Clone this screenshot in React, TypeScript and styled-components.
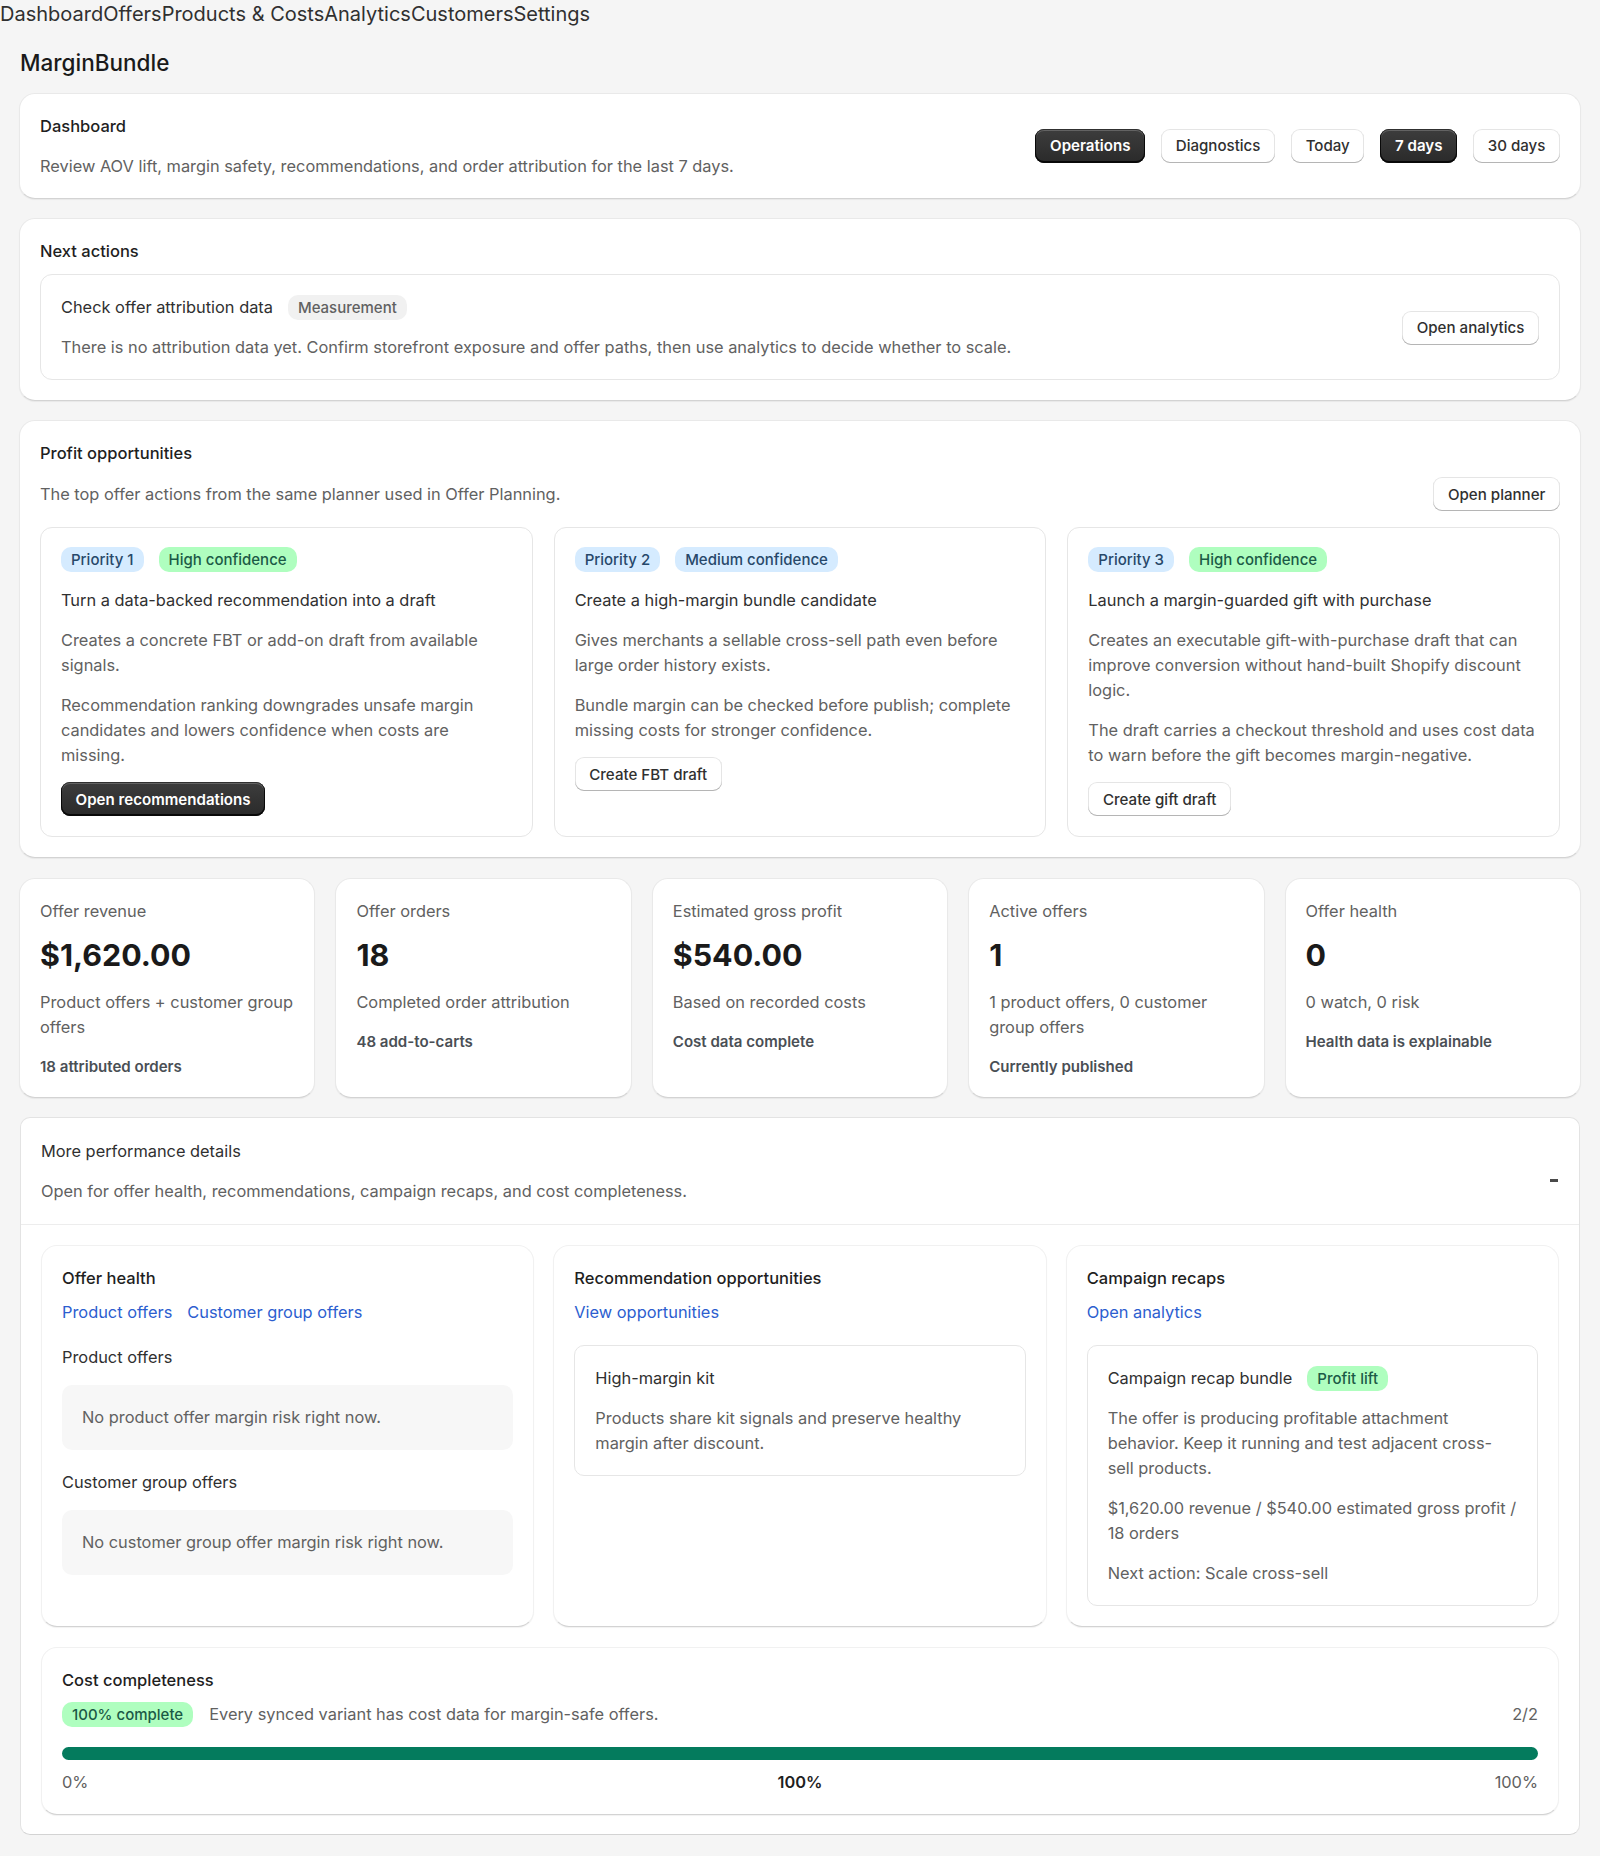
import styled, { createGlobalStyle } from 'styled-components'

const GlobalStyle = createGlobalStyle`
    * {
        box-sizing: border-box;
    }
    body {
        margin: 0;
        background: #f5f5f5;
        color: #303030;
        font-family: Inter, "Noto Sans", sans-serif;
        font-size: 16.37px;
        line-height: 25px;
    }
`

const NAV_ITEMS = ['Dashboard', 'Offers', 'Products & Costs', 'Analytics', 'Customers', 'Settings']

const OPPORTUNITIES = [
    {
        priority: 'Priority 1',
        confidence: 'High confidence',
        tone: 'success' as const,
        title: 'Turn a data-backed recommendation into a draft',
        summary: 'Creates a concrete FBT or add-on draft from available signals.',
        detail: 'Recommendation ranking downgrades unsafe margin candidates and lowers confidence when costs are missing.',
        action: 'Open recommendations',
        primary: true,
    },
    {
        priority: 'Priority 2',
        confidence: 'Medium confidence',
        tone: 'info' as const,
        title: 'Create a high-margin bundle candidate',
        summary: 'Gives merchants a sellable cross-sell path even before large order history exists.',
        detail: 'Bundle margin can be checked before publish; complete missing costs for stronger confidence.',
        action: 'Create FBT draft',
        primary: false,
    },
    {
        priority: 'Priority 3',
        confidence: 'High confidence',
        tone: 'success' as const,
        title: 'Launch a margin-guarded gift with purchase',
        summary: 'Creates an executable gift-with-purchase draft that can improve conversion without hand-built Shopify discount logic.',
        detail: 'The draft carries a checkout threshold and uses cost data to warn before the gift becomes margin-negative.',
        action: 'Create gift draft',
        primary: false,
    },
]

const METRICS = [
    { label: 'Offer revenue', value: '$1,620.00', sub: 'Product offers + customer group offers', note: '18 attributed orders' },
    { label: 'Offer orders', value: '18', sub: 'Completed order attribution', note: '48 add-to-carts' },
    { label: 'Estimated gross profit', value: '$540.00', sub: 'Based on recorded costs', note: 'Cost data complete' },
    { label: 'Active offers', value: '1', sub: '1 product offers, 0 customer group offers', note: 'Currently published' },
    { label: 'Offer health', value: '0', sub: '0 watch, 0 risk', note: 'Health data is explainable' },
]

const App = () => {
    return (
        <>
            <GlobalStyle />
            <Nav>
                {NAV_ITEMS.map((item) => (
                    <NavLink key={item}>{item}</NavLink>
                ))}
            </Nav>
            <Page>
                <AppTitle>MarginBundle</AppTitle>
                <Stack>
                    <HeaderCard>
                        <Column>
                            <CardTitle>Dashboard</CardTitle>
                            <Muted>Review AOV lift, margin safety, recommendations, and order attribution for the last 7 days.</Muted>
                        </Column>
                        <ButtonRow>
                            <Button $primary>Operations</Button>
                            <Button>Diagnostics</Button>
                            <Button>Today</Button>
                            <Button $primary>7 days</Button>
                            <Button>30 days</Button>
                        </ButtonRow>
                    </HeaderCard>

                    <Card>
                        <CardTitle>Next actions</CardTitle>
                        <ActionBox>
                            <Column>
                                <TitleLine>
                                    <span>Check offer attribution data</span>
                                    <Badge $tone="neutral">Measurement</Badge>
                                </TitleLine>
                                <Muted>There is no attribution data yet. Confirm storefront exposure and offer paths, then use analytics to decide whether to scale.</Muted>
                            </Column>
                            <Button>Open analytics</Button>
                        </ActionBox>
                    </Card>

                    <Card>
                        <CardTitle>Profit opportunities</CardTitle>
                        <PlannerRow>
                            <Muted>The top offer actions from the same planner used in Offer Planning.</Muted>
                            <Button>Open planner</Button>
                        </PlannerRow>
                        <ThreeColumns>
                            {OPPORTUNITIES.map((item) => (
                                <OpportunityCard key={item.priority}>
                                    <BadgeRow>
                                        <Badge $tone="info">{item.priority}</Badge>
                                        <Badge $tone={item.tone}>{item.confidence}</Badge>
                                    </BadgeRow>
                                    <div>{item.title}</div>
                                    <Muted>{item.summary}</Muted>
                                    <Muted>{item.detail}</Muted>
                                    <CardAction>
                                        <Button $primary={item.primary}>{item.action}</Button>
                                    </CardAction>
                                </OpportunityCard>
                            ))}
                        </ThreeColumns>
                    </Card>

                    <MetricGrid>
                        {METRICS.map((metric) => (
                            <MetricCard key={metric.label}>
                                <Muted>{metric.label}</Muted>
                                <MetricValue>{metric.value}</MetricValue>
                                <MetricSub>{metric.sub}</MetricSub>
                                <MetricNote>{metric.note}</MetricNote>
                            </MetricCard>
                        ))}
                    </MetricGrid>

                    <Details>
                        <DetailsHead>
                            <Column>
                                <div>More performance details</div>
                                <Muted>Open for offer health, recommendations, campaign recaps, and cost completeness.</Muted>
                            </Column>
                            <Collapse />
                        </DetailsHead>
                        <DetailsBody>
                            <DetailColumns>
                                <DetailCard>
                                    <CardTitle>Offer health</CardTitle>
                                    <LinkRow>
                                        <TextLink>Product offers</TextLink>
                                        <TextLink>Customer group offers</TextLink>
                                    </LinkRow>
                                    <SubLabel>Product offers</SubLabel>
                                    <EmptyBox>No product offer margin risk right now.</EmptyBox>
                                    <SubLabel>Customer group offers</SubLabel>
                                    <EmptyBox>No customer group offer margin risk right now.</EmptyBox>
                                </DetailCard>
                                <DetailCard>
                                    <CardTitle>Recommendation opportunities</CardTitle>
                                    <LinkRow>
                                        <TextLink>View opportunities</TextLink>
                                    </LinkRow>
                                    <ItemBox>
                                        <div>High-margin kit</div>
                                        <Muted>Products share kit signals and preserve healthy margin after discount.</Muted>
                                    </ItemBox>
                                </DetailCard>
                                <DetailCard>
                                    <CardTitle>Campaign recaps</CardTitle>
                                    <LinkRow>
                                        <TextLink>Open analytics</TextLink>
                                    </LinkRow>
                                    <ItemBox>
                                        <TitleLine>
                                            <span>Campaign recap bundle</span>
                                            <Badge $tone="success">Profit lift</Badge>
                                        </TitleLine>
                                        <Muted>The offer is producing profitable attachment behavior. Keep it running and test adjacent cross-sell products.</Muted>
                                        <Muted>$1,620.00 revenue / $540.00 estimated gross profit / 18 orders</Muted>
                                        <Muted>Next action: Scale cross-sell</Muted>
                                    </ItemBox>
                                </DetailCard>
                            </DetailColumns>
                            <CostCard>
                                <CardTitle>Cost completeness</CardTitle>
                                <CostRow>
                                    <Badge $tone="success">100% complete</Badge>
                                    <Muted>Every synced variant has cost data for margin-safe offers.</Muted>
                                    <CostCount>2/2</CostCount>
                                </CostRow>
                                <Progress>
                                    <ProgressFill style={{ width: '100%' }} />
                                </Progress>
                                <ScaleRow>
                                    <Muted>0%</Muted>
                                    <ScaleValue>100%</ScaleValue>
                                    <ScaleEnd>100%</ScaleEnd>
                                </ScaleRow>
                            </CostCard>
                        </DetailsBody>
                    </Details>
                </Stack>
            </Page>
        </>
    )
}

const Nav = styled.nav`
    display: flex;
    height: 28px;
    font-size: 20px;
    line-height: 28px;
    color: #303030;
`

const NavLink = styled.span`
    white-space: nowrap;
`

const Page = styled.main`
    padding: 20px 19px 21px;
`

const AppTitle = styled.h1`
    margin: 0 0 15px 1px;
    font-size: 22.5px;
    line-height: 30px;
    font-weight: 550;
    color: #1a1a1a;
`

const Stack = styled.div`
    display: flex;
    flex-direction: column;
    gap: 19px;
`

const Card = styled.section`
    padding: 20px;
    background: #fff;
    border: 1px solid #e9e9e9;
    border-bottom-color: #d3d3d3;
    border-radius: 16px;
    box-shadow: 0 1px 1px rgba(26, 26, 26, 0.06);
`

const HeaderCard = styled(Card)`
    display: flex;
    align-items: center;
    justify-content: space-between;
    padding-bottom: 19px;
`

const Column = styled.div`
    display: flex;
    flex-direction: column;
    gap: 15px;
`

const CardTitle = styled.div`
    font-size: 16.5px;
    font-weight: 550;
    color: #1f1f1f;
`

const Muted = styled.div`
    color: #616161;
`

const ButtonRow = styled.div`
    display: flex;
    gap: 16px;
    margin-bottom: 2px;
`

const Button = styled.button<{ $primary?: boolean }>`
    height: 34px;
    padding: 0 14.6px;
    border: 0;
    border-radius: 9px;
    font-family: inherit;
    font-size: 15.1px;
    font-weight: ${({ $primary }) => ($primary ? 620 : 500)};
    white-space: nowrap;
    color: ${({ $primary }) => ($primary ? '#fff' : '#303030')};
    background: ${({ $primary }) => ($primary ? 'linear-gradient(#3d3d3d, #2a2a2a)' : '#fff')};
    box-shadow: ${({ $primary }) =>
        $primary
            ? 'inset 0 -1px 0 1px rgba(0, 0, 0, 0.8), inset 0 0 0 1px #303030, inset 0 1px 0 1px rgba(255, 255, 255, 0.2)'
            : 'inset 0 -1px 0 #b5b5b5, inset 0 0 0 1px rgba(0, 0, 0, 0.1)'};
`

const ActionBox = styled.div`
    display: flex;
    align-items: center;
    justify-content: space-between;
    margin-top: 10px;
    padding: 20px 20px 19px;
    border: 1px solid #e6e6e6;
    border-radius: 12px;
`

const TitleLine = styled.div`
    display: flex;
    align-items: center;
    gap: 15px;
`

const BadgeRow = styled.div`
    display: flex;
    gap: 15px;
    margin-bottom: 1px;
`

const TONES = {
    neutral: { background: '#f1f1f1', color: '#616161' },
    info: { background: '#d5ebff', color: '#27486a' },
    success: { background: '#affebf', color: '#1b5a46' },
}

const Badge = styled.span<{ $tone: keyof typeof TONES }>`
    display: inline-block;
    height: 25px;
    padding: 0 10px;
    border-radius: 10px;
    font-size: 15px;
    line-height: 25px;
    font-weight: 500;
    white-space: nowrap;
    background: ${({ $tone }) => TONES[$tone].background};
    color: ${({ $tone }) => TONES[$tone].color};
`

const PlannerRow = styled.div`
    display: flex;
    align-items: center;
    justify-content: space-between;
    margin: 11px 0 16px;
`

const ThreeColumns = styled.div`
    display: grid;
    grid-template-columns: repeat(3, 1fr);
    gap: 21px;
`

const OpportunityCard = styled.article`
    display: flex;
    flex-direction: column;
    gap: 15px;
    padding: 19px 20px 20px;
    border: 1px solid #e6e6e6;
    border-radius: 12px;
`

const CardAction = styled.div`
    margin-top: -1px;
`

const MetricGrid = styled.div`
    display: grid;
    grid-template-columns: repeat(5, 1fr);
    gap: 20px;
    margin-top: 1px;
`

const MetricCard = styled(Card)`
    padding-bottom: 19px;
`

const MetricValue = styled.div`
    margin: 11px 0 14px;
    font-size: 30.4px;
    line-height: 41px;
    font-weight: 700;
    color: #1a1a1a;
`

const MetricSub = styled(Muted)``

const MetricNote = styled.div`
    margin-top: 16px;
    font-size: 15.05px;
    line-height: 22px;
    font-weight: 580;
    color: #4a4f55;
`

const Details = styled.section`
    margin: 0 1px;
    background: #fff;
    border: 1px solid #e3e3e3;
    border-bottom-color: #d3d3d3;
    border-radius: 10px;
`

const DetailsHead = styled.div`
    display: flex;
    align-items: center;
    justify-content: space-between;
    padding: 21px 21px 20px 20px;
    border-bottom: 1px solid #ededed;
`

const Collapse = styled.span`
    width: 8px;
    height: 3px;
    margin-top: 17px;
    background: #4a4a4a;
`

const DetailsBody = styled.div`
    display: flex;
    flex-direction: column;
    gap: 20px;
    padding: 20px 20px 19px;
`

const DetailColumns = styled.div`
    display: grid;
    grid-template-columns: repeat(3, 1fr);
    gap: 19px;
`

const DetailCard = styled(Card)`
    border-color: #f1f1f1;
    border-bottom-color: #d3d3d3;
`

const LinkRow = styled.div`
    display: flex;
    gap: 15px;
    margin: 9px 0 20px;
`

const TextLink = styled.a`
    color: #2c5ecf;
    cursor: pointer;
`

const SubLabel = styled.div`
    margin-bottom: 15px;
`

const EmptyBox = styled(Muted)`
    margin-bottom: 20px;
    padding: 20px;
    background: #f7f7f7;
    border-radius: 10px;
`

const ItemBox = styled.div`
    display: flex;
    flex-direction: column;
    gap: 15px;
    padding: 20px 20px 19px;
    border: 1px solid #e6e6e6;
    border-radius: 10px;
`

const CostCard = styled(DetailCard)`
    padding-bottom: 19px;
`

const CostRow = styled.div`
    display: flex;
    align-items: center;
    gap: 16px;
    margin: 9px 0 20px;
`

const CostCount = styled(Muted)`
    margin-left: auto;
`

const Progress = styled.div`
    height: 13px;
    background: #e3e3e3;
    border-radius: 7px;
    overflow: hidden;
`

const ProgressFill = styled.div`
    height: 100%;
    background: #047b5d;
`

const ScaleRow = styled.div`
    display: grid;
    grid-template-columns: 1fr auto 1fr;
    margin-top: 10px;
`

const ScaleValue = styled.div`
    font-weight: 600;
    color: #1f1f1f;
`

const ScaleEnd = styled(Muted)`
    text-align: right;
`

export default App
